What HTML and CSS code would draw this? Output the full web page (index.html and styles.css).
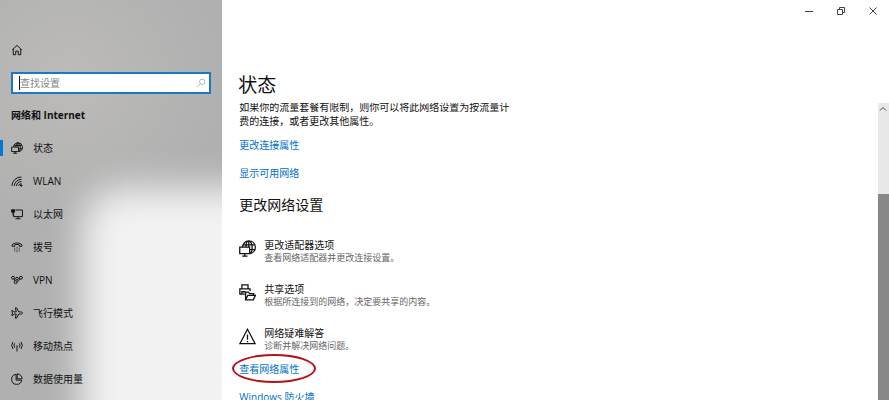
FILE: index.html
```html
<!DOCTYPE html>
<html lang="zh-CN">
<head>
  <meta charset="UTF-8" />
  <meta name="viewport" content="width=device-width, initial-scale=1.0"/>
  <title>设置</title>
  <link rel="stylesheet" href="styles.css">
</head>
<body>

<div class="window">
  <aside class="sidebar">
    <button class="home" aria-label="主页">
      <svg viewBox="0 0 16 16"><path d="M1.5 8 8 1.8 14.5 8M3 6.8V14.3H6.3V9.5H9.7V14.3H13V6.8"/></svg>
    </button>

    <div class="search">
      <input type="text" id="search" placeholder="查找设置" aria-label="查找设置" />
      <span class="caret"></span>
      <svg viewBox="0 0 16 16"><circle cx="10" cy="6" r="4.3"/><path d="M7 9.2 1.5 14.7"/></svg>
    </div>

    <h2 class="group-title">网络和 Internet</h2>

    <nav class="nav">
      <a href="#" class="nav-item active">
        <svg viewBox="0 0 16 16"><path d="M3.2 6.5C4 3 6.5 1 9.2 1A6 6 0 0 1 10.8 12.8M4.3 4.6H14.1M10 9H15M6.4 6.5C6.6 3.2 7.8 1 9.2 1S12.4 3.6 12.4 7 11.6 11.8 10.8 12.8M9.2 1V6.5M.9 6.8H10V12.8H.9ZM5.5 12.8V15M3 15H8"/></svg>
        <span>状态</span>
      </a>
      <a href="#" class="nav-item">
        <svg viewBox="0 0 16 16"><path d="M1.3 14.5A12 12 0 0 1 14 2.7M4.4 14.5A9.2 9.2 0 0 1 14 5.8M7.3 14.5A6.5 6.5 0 0 1 14 8.8M10.2 14.5A3.6 3.6 0 0 1 14 11.6"/><circle class="fill" cx="13.7" cy="14" r="1"/></svg>
        <span>WLAN</span>
      </a>
      <a href="#" class="nav-item">
        <svg viewBox="0 0 16 16"><path d="M6 2.7H15.3V11.5H3.5V8M9.4 11.5V14.3M6 14.3H12.8M2.8 6.7V10"/><path class="fill" d="M.8 2.4H4.8V5L3.7 6.5H1.9L.8 5Z"/></svg>
        <span>以太网</span>
      </a>
      <a href="#" class="nav-item">
        <svg viewBox="0 0 16 16"><path d="M1.2 6.8C1 1.3 15 1.3 14.8 6.8L11.4 7.2 10.8 5Q8 4.2 5.2 5L4.6 7.2Z"/><path class="dots" d="M5 9V15M8 8V15M11 9V15"/></svg>
        <span>拨号</span>
      </a>
      <a href="#" class="nav-item">
        <svg viewBox="0 0 16 16"><circle cx="2.7" cy="5" r="1.9"/><circle cx="8" cy="6.2" r="1.8"/><circle cx="13.3" cy="5" r="1.9"/><circle cx="6.2" cy="11" r="1.9"/><path d="M4 6.3 5.2 9.4M9.8 6 11.4 5.4M8 11 12.3 6.7"/></svg>
        <span>VPN</span>
      </a>
      <a href="#" class="nav-item">
        <svg viewBox="0 0 16 16"><path d="M15.3 8C15.3 7 14.3 6.6 13 6.6H10.3L7.5 1.2H5.8L7 6.6H4L2.5 4.8H1L2 8 1 11.2H2.5L4 9.4H7L5.8 14.8H7.5L10.3 9.4H13C14.3 9.4 15.3 9 15.3 8Z"/></svg>
        <span>飞行模式</span>
      </a>
      <a href="#" class="nav-item">
        <svg viewBox="0 0 16 16"><path d="M2.7 2.5Q-.8 7 2.7 12M5 4.5Q3 7 5 10M13.3 2.5Q16.8 7 13.3 12M11 4.5Q13 7 11 10M8 7V15.3"/></svg>
        <span>移动热点</span>
      </a>
      <a href="#" class="nav-item">
        <svg viewBox="0 0 16 16"><path d="M6.8 1.8A6.7 6.7 0 1 0 14.2 9.5"/><path d="M8.2 1.2V7.8H14.8A6.6 6.6 0 0 0 8.2 1.2ZM6.8 1.8V9.5H14.2"/></svg>
        <span>数据使用量</span>
      </a>
    </nav>
  </aside>

  <main class="main">
    <div class="titlebar">
      <button aria-label="最小化"><svg viewBox="0 0 8 8"><path d="M0 4.5H8"/></svg></button>
      <button aria-label="还原"><svg viewBox="0 0 8 8"><path d="M.5 2.5H5.5V7.5H.5ZM2.5 2.5V.5H7.5V5.5H5.5"/></svg></button>
      <button aria-label="关闭"><svg viewBox="0 0 8 8"><path d="M.5.5 7.5 7.5M7.5.5.5 7.5"/></svg></button>
    </div>

    <h1 class="page-title">状态</h1>

    <div class="scroll-area">
      <div class="content">
        <p class="intro">如果你的流量套餐有限制，则你可以将此网络设置为按流量计<br>费的连接，或者更改其他属性。</p>
        <a href="#" class="link">更改连接属性</a>
        <a href="#" class="link">显示可用网络</a>

        <h2 class="section-title">更改网络设置</h2>

        <div class="options">
          <a href="#" class="option">
            <svg viewBox="0 0 16 16"><path d="M3.2 6.5C4 3 6.5 .8 9.2 .8A6.1 6.1 0 0 1 10.8 12.8M4.3 4.6H14.3M10 9H15M6.4 6.5C6.6 3.2 7.8 .8 9.2 .8S12.4 3.6 12.4 7 11.6 11.8 10.8 12.8M9.2 .8V6.5M.7 6.8H10V12.8H.7ZM5.4 12.8V15.2M3 15.2H8"/></svg>
            <span class="option-title">更改适配器选项</span>
            <span class="option-text">查看网络适配器并更改连接设置。</span>
          </a>
          <a href="#" class="option">
            <svg viewBox="0 0 16 16"><path d="M2.7 4.5V.8H8.5V4.5M5.5 9.5H.8V4.5H10.4V6.5M2.7 9.5V7.3H6M6.2 14.8V7.7H9L10 9H13.8V10.7M6.2 14.9 8.3 10.7H15.5L13.5 14.9Z"/></svg>
            <span class="option-title">共享选项</span>
            <span class="option-text">根据所连接到的网络，决定要共享的内容。</span>
          </a>
          <a href="#" class="option">
            <svg viewBox="0 0 16 16"><path d="M8 1.2 15.2 14.8H.8ZM8 6V11M8 12.2V13.4"/></svg>
            <span class="option-title">网络疑难解答</span>
            <span class="option-text">诊断并解决网络问题。</span>
          </a>
        </div>

        <a href="#" class="link marked">查看网络属性</a>
        <a href="#" class="link">Windows 防火墙</a>
      </div>

      <div class="scrollbar">
        <svg viewBox="0 0 8 8"><path d="M1 5.5 4 2.5 7 5.5"/></svg>
        <div class="thumb"></div>
      </div>
    </div>
  </main>
</div>

</body>
</html>
```
FILE: styles.css
```css
* {
  box-sizing: border-box;
}
body {
  font-family: 'Open Sans', 'Noto Sans CJK SC', sans-serif;
  font-size: 10px;
  background: #fff;
  color: #111;
  margin: 0;
}
h1, h2, p {
  margin: 0;
  font-weight: 400;
}
a {
  color: inherit;
  text-decoration: none;
}
button {
  padding: 0;
  border: none;
  background: none;
}
svg {
  display: block;
  fill: none;
  stroke: currentColor;
}
.window {
  display: flex;
  height: 100vh;
  overflow: hidden;
}

/* left pane */
.sidebar {
  position: relative;
  z-index: 0;
  flex: 0 0 25%;
  overflow: hidden;
  padding-top: 44px;
  background: radial-gradient(circle at 70px 80px, #bcbbb9, #b0b0b0 150px);
}
.sidebar::before {
  content: "";
  position: absolute;
  z-index: -1;
  top: 188px;
  right: -60px;
  bottom: -60px;
  left: 82px;
  border-radius: 40px;
  background: #f2f2f2;
  filter: blur(18px);
}
.home {
  display: block;
  margin-left: 11px;
  color: #111;
}
.home svg {
  width: 12px;
  height: 12px;
  stroke-width: 1.3;
}
.search {
  position: relative;
  margin: 16px 11px 0;
}
.search input {
  display: block;
  width: 100%;
  height: 22px;
  padding: 0 24px 0 7px;
  border: 2px solid #1a78c8;
  background: #fff;
  font: inherit;
  outline: none;
}
.search input::placeholder {
  color: #888;
}
.search .caret {
  position: absolute;
  top: 4px;
  left: 8px;
  width: 1px;
  height: 14px;
  background: #111;
}
.search svg {
  position: absolute;
  top: 6px;
  right: 5px;
  width: 10px;
  height: 10px;
  color: #888;
}
.group-title {
  margin: 14px 11px 9px;
  line-height: 14px;
  font-size: 10px;
  font-weight: 700;
}
.nav-item {
  display: flex;
  align-items: center;
  gap: 10px;
  height: 33px;
  padding-left: 11px;
}
.nav-item svg {
  width: 12px;
  height: 12px;
  stroke-width: 1.3;
}
.nav-item .fill {
  fill: currentColor;
}
.nav-item .dots {
  stroke-dasharray: 1 1;
}
.nav-item.active {
  position: relative;
}
.nav-item.active::before {
  content: "";
  position: absolute;
  left: 0;
  width: 3px;
  height: 16px;
  background: #0078d7;
}

/* right pane */
.main {
  flex: 1;
  display: flex;
  flex-direction: column;
  min-width: 0;
}
.titlebar {
  display: flex;
  justify-content: flex-end;
}
.titlebar button {
  display: grid;
  place-items: center;
  width: 32px;
  height: 22px;
  color: #444;
}
.titlebar svg {
  width: 8px;
  height: 8px;
}
.page-title {
  margin: 50px 0 5px 16px;
  line-height: 26px;
  font-size: 19px;
}
.scroll-area {
  flex: 1;
  display: flex;
  min-height: 0;
  overflow: hidden;
}
.content {
  flex: 1;
  padding-left: 17px;
}
.intro {
  margin: -3px 0 10px;
  line-height: 14px;
}
.link {
  display: block;
  width: fit-content;
  margin-bottom: 13px;
  line-height: 15px;
  color: #0071cd;
}
.section-title {
  margin: 0 0 22px;
  line-height: 22px;
  font-size: 14px;
}
.options {
  display: grid;
  gap: 18px;
  margin-bottom: 10px;
}
.option {
  display: grid;
  grid-template-columns: 17px 1fr;
  column-gap: 8px;
}
.option svg {
  grid-row: span 2;
  width: 17px;
  height: 17px;
  margin-top: 2px;
  stroke-width: 1.2;
}
.option-title {
  line-height: 14px;
}
.option-text {
  line-height: 12px;
  font-size: 9px;
  color: #666;
}
.marked {
  position: relative;
}
.marked::after {
  content: "";
  position: absolute;
  inset: -8px -17px -6px -7px;
  border: 2px solid #b5121b;
  border-radius: 50%;
}
.scrollbar {
  display: flex;
  flex-direction: column;
  width: 11px;
  background: #e8e8e8;
}
.scrollbar svg {
  width: 8px;
  height: 8px;
  margin: 2px 1px 81px;
  color: #444;
}
.thumb {
  flex: 1;
  background: #888;
}
```
